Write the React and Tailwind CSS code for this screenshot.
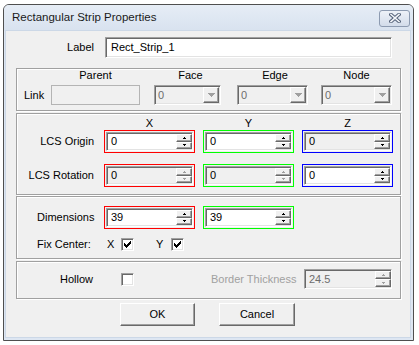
import React from 'react';

const sunken =
  'border-t border-l border-b border-r border-t-[#a0a0a0] border-l-[#a0a0a0] border-b-white border-r-white shadow-[inset_1px_1px_0_#696969,inset_-1px_-1px_0_#e3e3e3]';
const raised =
  'border-t border-l border-b border-r border-t-white border-l-white border-b-[#696969] border-r-[#696969] shadow-[inset_-1px_-1px_0_#a0a0a0]';
const etched = 'border border-[#a0a0a0] shadow-[inset_1px_1px_0_#fff,1px_1px_0_#fff]';

function Tri({ down, color }) {
  return (
    <svg width="3" height="2" viewBox="0 0 3 2" shapeRendering="crispEdges">
      {down ? (
        <>
          <rect x="0" y="0" width="3" height="1" fill={color} />
          <rect x="1" y="1" width="1" height="1" fill={color} />
        </>
      ) : (
        <>
          <rect x="1" y="0" width="1" height="1" fill={color} />
          <rect x="0" y="1" width="3" height="1" fill={color} />
        </>
      )}
    </svg>
  );
}

function SpinBtn({ down, on }) {
  return (
    <div className={`flex-1 flex items-center justify-center bg-[#f0f0f0] ${raised}`}>
      <Tri down={down} color={on ? '#000' : '#a0a0a0'} />
    </div>
  );
}

function Spin({ ring, value, white, on = true, dim, w = 'w-[91px]', h = 'h-[23px]' }) {
  const box = (
    <div className={`h-full flex ${sunken} ${white ? 'bg-white' : 'bg-[#f0f0f0]'}`}>
      <div className={`flex-1 flex items-center pl-[4px] ${dim ? 'text-[#6d6d6d]' : 'text-black'}`}>{value}</div>
      <div className="w-[16px] flex flex-col py-px">
        <SpinBtn on={on} />
        <SpinBtn on={on} down />
      </div>
    </div>
  );
  if (!ring) return <div className={`${w} ${h}`}>{box}</div>;
  return <div className={`${w} ${h} border ${ring} p-px`}>{box}</div>;
}

function Combo({ w }) {
  return (
    <div className={`${w} h-[20px] flex bg-[#f0f0f0] ${sunken}`}>
      <div className="flex-1 flex items-center pl-[3px] text-[#6d6d6d]">0</div>
      <div className={`w-[16px] my-[1px] mr-[1px] flex items-center justify-center bg-[#f0f0f0] ${raised}`}>
        <svg width="7" height="4" viewBox="0 0 7 4" shapeRendering="crispEdges">
          <rect x="0" y="0" width="7" height="1" fill="#a0a0a0" />
          <rect x="1" y="1" width="5" height="1" fill="#a0a0a0" />
          <rect x="2" y="2" width="3" height="1" fill="#a0a0a0" />
          <rect x="3" y="3" width="1" height="1" fill="#a0a0a0" />
        </svg>
      </div>
    </div>
  );
}

function Check({ checked }) {
  return (
    <div className={`w-[13px] h-[13px] bg-white flex items-center justify-center ${sunken}`}>
      {checked && (
        <svg width="7" height="7" viewBox="0 0 7 7" shapeRendering="crispEdges">
          <path d="M0 2h1v1h1v1h1V3h1V2h1V1h1V0h1v3h-1v1h-1v1h-1v1h-1v1H2V6H1V5H0z" fill="#000" />
        </svg>
      )}
    </div>
  );
}

function Button({ children, w }) {
  return (
    <div className={`${w} h-[23px] flex items-center justify-center bg-[#f0f0f0] ${raised}`}>{children}</div>
  );
}

export default function App() {
  return (
    <div className="w-[419px] h-[345px] bg-white pt-[4px] pl-[3px] font-['Liberation_Sans',Arial,sans-serif] text-[11px] text-black">
      <div className="w-[411px] h-[337px] border border-[#4f4f4f] rounded-t-[6px] bg-[#dde6f2]">
        <div className="h-[26px] flex items-center pl-[8px] pr-[3px] rounded-t-[5px] bg-gradient-to-b from-[#e6edf6] to-[#d8e2ef]">
          <div className="flex-1 text-[11.5px] text-[#1a1a1a]">Rectangular Strip Properties</div>
          <div className="w-[31px] h-[17px] rounded-[3px] border border-[#8d9bb1] bg-gradient-to-b from-[#eef2f8] to-[#d3dcea] flex items-center justify-center">
            <svg width="12" height="10" viewBox="0 0 12 10">
              <path d="M2 1.5L10 8.5M10 1.5L2 8.5" stroke="#55637a" strokeWidth="3.6" strokeLinecap="square" />
              <path d="M2 1.5L10 8.5M10 1.5L2 8.5" stroke="#f4f6fa" strokeWidth="1.6" strokeLinecap="square" />
            </svg>
          </div>
        </div>

        <div className="ml-[2px] w-[404px] h-[306px] bg-[#f0f0f0] pt-[6px] shadow-[0_0_0_1px_#ccd8e7]">
          {/* label */}
          <div className="flex items-center h-[21px]">
            <div className="w-[88px] text-right">Label</div>
            <div className={`ml-[11px] w-[287px] h-[21px] bg-white flex items-center pl-[5px] ${sunken}`}>Rect_Strip_1</div>
          </div>

          {/* link */}
          <div className={`mt-[10px] ml-[10px] w-[385px] h-[43px] ${etched}`}>
            <div className="flex h-[13px] leading-[13px]">
              <div className="ml-[34px] w-[89px] text-center">Parent</div>
              <div className="ml-[14px] w-[67px] text-center pl-[6px]">Face</div>
              <div className="ml-[16px] w-[71px] text-center pl-[5px]">Edge</div>
              <div className="ml-[13px] w-[71px] text-center">Node</div>
            </div>
            <div className="mt-[3px] flex items-center pl-[7px]">
              <div className="w-[27px]">Link</div>
              <div className="w-[89px] h-[20px] bg-[#f0f0f0] border border-[#b4b4b4]" />
              <div className="ml-[14px]"><Combo w="w-[67px]" /></div>
              <div className="ml-[16px]"><Combo w="w-[71px]" /></div>
              <div className="ml-[13px]"><Combo w="w-[71px]" /></div>
            </div>
          </div>

          {/* LCS */}
          <div className={`mt-[2px] ml-[10px] w-[385px] h-[82px] ${etched}`}>
            <div className="mt-[3px] flex h-[13px] leading-[13px]">
              <div className="w-[77px]" />
              <div className="ml-[10px] w-[91px] text-center">X</div>
              <div className="ml-[8px] w-[91px] text-center">Y</div>
              <div className="ml-[8px] w-[91px] text-center">Z</div>
            </div>
            <div className="flex items-center">
              <div className="w-[77px] text-right">LCS Origin</div>
              <div className="ml-[10px]"><Spin ring="border-[#ff0000]" value="0" white /></div>
              <div className="ml-[8px]"><Spin ring="border-[#00ff00]" value="0" white /></div>
              <div className="ml-[8px]"><Spin ring="border-[#0000ff]" value="0" /></div>
            </div>
            <div className="mt-[11px] flex items-center">
              <div className="w-[77px] text-right">LCS Rotation</div>
              <div className="ml-[10px]"><Spin ring="border-[#ff0000]" value="0" on={false} /></div>
              <div className="ml-[8px]"><Spin ring="border-[#00ff00]" value="0" on={false} /></div>
              <div className="ml-[8px]"><Spin ring="border-[#0000ff]" value="0" white /></div>
            </div>
          </div>

          {/* dimensions */}
          <div className={`mt-[1px] ml-[10px] w-[385px] h-[63px] pt-[9px] ${etched}`}>
            <div className="flex items-center pl-[20px]">
              <div className="w-[67px]">Dimensions</div>
              <Spin ring="border-[#ff0000]" value="39" white />
              <div className="ml-[8px]"><Spin ring="border-[#00ff00]" value="39" white /></div>
            </div>
            <div className="mt-[9px] flex items-center h-[13px] pl-[20px]">
              <div className="w-[70px]">Fix Center:</div>
              <div className="w-[14px]">X</div>
              <Check checked />
              <div className="ml-[22px] w-[15px]">Y</div>
              <Check checked />
            </div>
          </div>

          {/* hollow */}
          <div className={`mt-[2px] ml-[10px] w-[385px] h-[38px] pb-[2px] flex items-center pl-[43px] ${etched}`}>
            <div className="w-[61px]">Hollow</div>
            <Check />
            <div className="ml-[77px] w-[93px] text-[#a0a0a0]">Border Thickness</div>
            <Spin value="24.5" dim on={false} w="w-[88px]" h="h-[20px]" />
          </div>

          {/* buttons */}
          <div className="mt-[4px] flex pl-[114px]">
            <Button w="w-[75px]">OK</Button>
            <div className="ml-[24px]"><Button w="w-[76px]">Cancel</Button></div>
          </div>
        </div>
      </div>
    </div>
  );
}
